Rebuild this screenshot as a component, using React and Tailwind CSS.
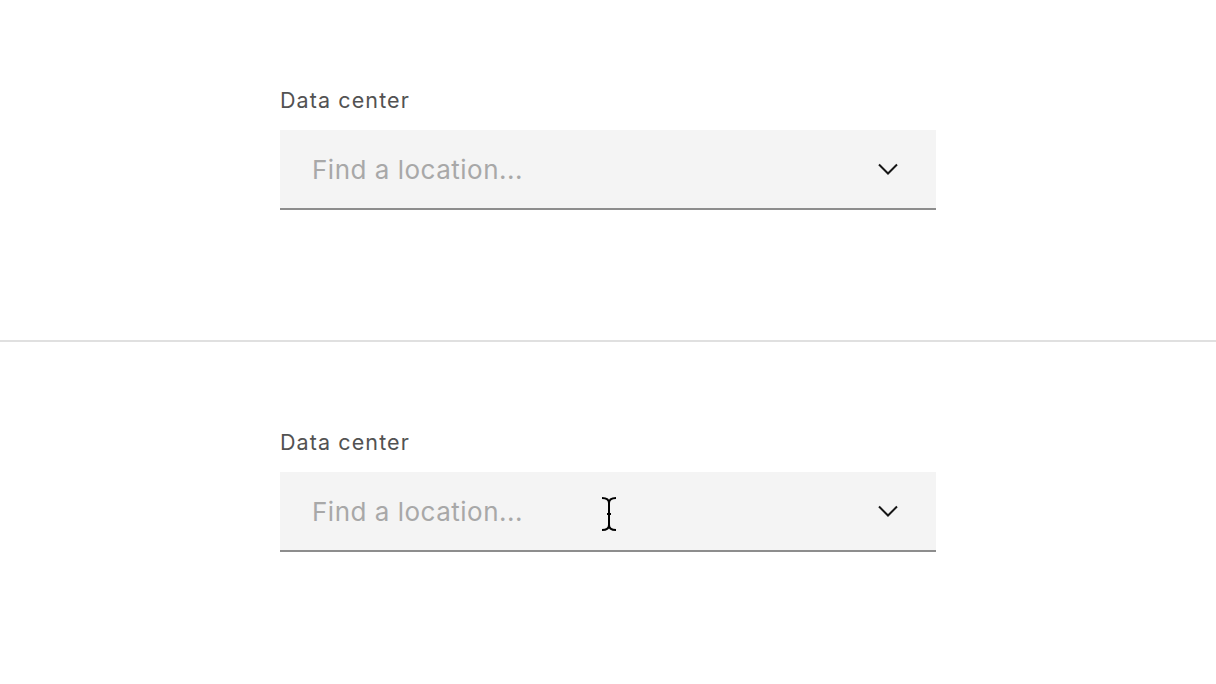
import React from "react";

function Chevron() {
  return (
    <svg width="20" height="12" viewBox="0 0 20 12" fill="none" className="block">
      <path d="M1 1.5 L10 10.5 L19 1.5" stroke="#161616" strokeWidth="2" />
    </svg>
  );
}

function IBeam() {
  return (
    <svg width="16" height="34" viewBox="0 0 16 34" fill="none" className="block">
      <path
        d="M1 1 C5 1 8 2 8 6 C8 2 11 1 15 1 M8 6 L8 28 M1 33 C5 33 8 32 8 28 C8 32 11 33 15 33 M6 17 L10 17"
        stroke="#000"
        strokeWidth="2"
      />
    </svg>
  );
}

function ComboBox({ showCursor }) {
  return (
    <div className="flex h-[340px] flex-col px-[280px] pt-[86px]">
      <label className="mb-[16px] block text-[21.5px] leading-[28px] tracking-[1.1px] text-[#525252]">
        Data center
      </label>
      <div className="relative flex h-[80px] w-[656px] items-center border-b-2 border-[#8d8d8d] bg-[#f4f4f4] pl-[32px] pr-[38px]">
        <span className="flex-1 pt-[2px] text-[26px] leading-[32px] tracking-[0.5px] text-[#a8a8a8]">
          Find a location...
        </span>
        <Chevron />
        {showCursor && (
          <div className="absolute left-[321px] top-[25px]">
            <IBeam />
          </div>
        )}
      </div>
    </div>
  );
}

export default function App() {
  return (
    <div className="min-h-screen bg-white font-['Inter','Noto_Sans',sans-serif]">
      <div className="border-b-2 border-[#e0e0e0]">
        <ComboBox />
      </div>
      <ComboBox showCursor />
    </div>
  );
}
